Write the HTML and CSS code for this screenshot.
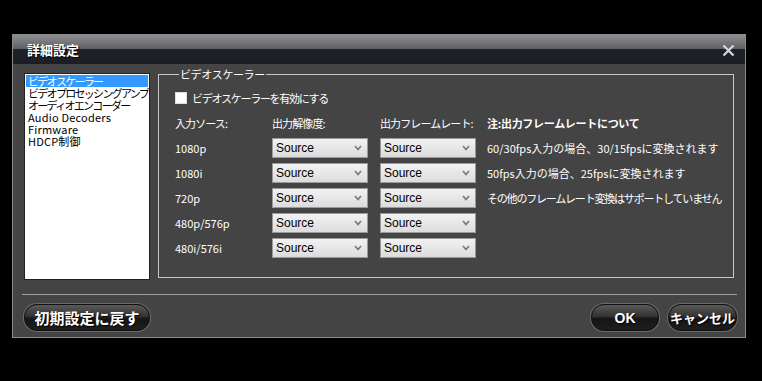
FILE: index.html
```html
<html>
	<head>
		<title>詳細設定</title>
		<meta name="viewport" content="width=device-width, initial-scale=1">
		<link rel="stylesheet" href="styles.css">
	</head>
	<body>
		<div id="dialog">
			<div id="titlebar">
				<span class="title">詳細設定</span>
				<svg class="close" width="13" height="13" viewBox="0 0 13 13"><path d="M1.5 1.5 L11.5 11.5 M11.5 1.5 L1.5 11.5" stroke="#d8d8d8" stroke-width="2.2"/></svg>
			</div>
			<div id="body">
				<ul id="menu">
					<li class="sel jp">ビデオスケーラー</li>
					<li class="jp">ビデオプロセッシングアンプ</li>
					<li class="jp">オーディオエンコーダー</li>
					<li>Audio Decoders</li>
					<li>Firmware</li>
					<li>HDCP制御</li>
				</ul>
				<fieldset id="group">
					<legend>ビデオスケーラー</legend>
					<label class="check"><span class="box"></span>ビデオスケーラーを有効にする</label>
					<div class="grid">
						<div class="head">入力ソース:</div>
						<div class="head">出力解像度:</div>
						<div class="head">出力フレームレート:</div>
						<div class="head note-title">注:出力フレームレートについて</div>

						<div class="src">1080p</div>
						<div class="select">Source<svg width="8" height="6" viewBox="0 0 8 6"><path d="M1 1 L4 4.5 L7 1" stroke="#777" stroke-width="1.6" fill="none"/></svg></div>
						<div class="select">Source<svg width="8" height="6" viewBox="0 0 8 6"><path d="M1 1 L4 4.5 L7 1" stroke="#777" stroke-width="1.6" fill="none"/></svg></div>
						<div class="note">60/30fps入力の場合、30/15fpsに変換されます</div>

						<div class="src">1080i</div>
						<div class="select">Source<svg width="8" height="6" viewBox="0 0 8 6"><path d="M1 1 L4 4.5 L7 1" stroke="#777" stroke-width="1.6" fill="none"/></svg></div>
						<div class="select">Source<svg width="8" height="6" viewBox="0 0 8 6"><path d="M1 1 L4 4.5 L7 1" stroke="#777" stroke-width="1.6" fill="none"/></svg></div>
						<div class="note">50fps入力の場合、25fpsに変換されます</div>

						<div class="src">720p</div>
						<div class="select">Source<svg width="8" height="6" viewBox="0 0 8 6"><path d="M1 1 L4 4.5 L7 1" stroke="#777" stroke-width="1.6" fill="none"/></svg></div>
						<div class="select">Source<svg width="8" height="6" viewBox="0 0 8 6"><path d="M1 1 L4 4.5 L7 1" stroke="#777" stroke-width="1.6" fill="none"/></svg></div>
						<div class="note tight">その他のフレームレート変換はサポートしていません</div>

						<div class="src">480p/576p</div>
						<div class="select">Source<svg width="8" height="6" viewBox="0 0 8 6"><path d="M1 1 L4 4.5 L7 1" stroke="#777" stroke-width="1.6" fill="none"/></svg></div>
						<div class="select">Source<svg width="8" height="6" viewBox="0 0 8 6"><path d="M1 1 L4 4.5 L7 1" stroke="#777" stroke-width="1.6" fill="none"/></svg></div>
						<div></div>

						<div class="src">480i/576i</div>
						<div class="select">Source<svg width="8" height="6" viewBox="0 0 8 6"><path d="M1 1 L4 4.5 L7 1" stroke="#777" stroke-width="1.6" fill="none"/></svg></div>
						<div class="select">Source<svg width="8" height="6" viewBox="0 0 8 6"><path d="M1 1 L4 4.5 L7 1" stroke="#777" stroke-width="1.6" fill="none"/></svg></div>
						<div></div>
					</div>
				</fieldset>
			</div>
			<div id="footer">
				<div class="btn reset">初期設定に戻す</div>
				<div class="right">
					<div class="btn ok">OK</div>
					<div class="btn cancel">キャンセル</div>
				</div>
			</div>
		</div>
	</body>
</html>
```

FILE: styles.css
```css
* {
	font-family: "Noto Sans CJK JP", "DejaVu Sans", sans-serif;
	box-sizing: border-box;
}
body {
	margin: 0;
	background: black;
	width: 762px;
	height: 381px;
	overflow: hidden;
}
#dialog {
	margin: 34px 0 0 12px;
	width: 734px;
	height: 304px;
	background: #444;
	border: 1px solid #8a8a8a;
	display: flex;
	flex-direction: column;
}
#titlebar {
	height: 29px;
	background: linear-gradient(#8c8e90 0%, #5e6064 48%, #1f2329 49%, #1a1e24 100%);
	display: flex;
	align-items: center;
	justify-content: space-between;
	padding: 0 10px 0 14px;
}
.title {
	color: white;
	font-weight: bold;
	font-size: 13px;
	text-shadow: 1px 1px 1px black;
}
.close {
	margin-top: 1px;
}
#body {
	display: flex;
	padding: 9px 0 0 11px;
	gap: 8px;
	height: 222px;
}
#menu {
	list-style: none;
	margin: 0;
	padding: 1px;
	width: 126px;
	height: 207px;
	background: white;
	border: 1px solid #222;
	font-size: 11px;
	line-height: 12px;
}
#menu li {
	color: black;
	padding-left: 2px;
	white-space: nowrap;
	letter-spacing: 0.2px;
}
#menu li.jp {
	letter-spacing: -1.7px;
}
#menu li.sel {
	background: #3399ff;
	color: white;
}
#group {
	flex: none;
	width: 576px;
	min-width: 0;
	margin: -6px 0 0 0;
	border: 1px solid #c8c8c8;
	padding: 10px 16px 0 16px;
	height: 211px;
	color: white;
	font-size: 11px;
}
legend {
	font-size: 11px;
	line-height: 14px;
	padding: 0 1px;
	margin-left: 4px;
	color: white;
	letter-spacing: -0.4px;
}
.check {
	display: flex;
	align-items: center;
	gap: 5px;
	height: 14px;
	font-size: 11px;
	letter-spacing: -1.3px;
}
.box {
	width: 12px;
	height: 12px;
	background: white;
	border: 1px solid #ddd;
}
.grid {
	display: grid;
	grid-template-columns: 97px 108px 107px auto;
	grid-auto-rows: 20px;
	row-gap: 5px;
	margin-top: 8px;
	align-items: center;
}
.head {
	font-size: 11px;
	height: 20px;
	line-height: 20px;
	white-space: nowrap;
	letter-spacing: -0.9px;
}
.note-title {
	font-weight: bold;
	letter-spacing: -0.3px;
}
.src, .note {
	font-size: 11px;
	white-space: nowrap;
}
.tight {
	letter-spacing: -1.2px;
}
.select {
	width: 96px;
	height: 20px;
	background: linear-gradient(#f2f2f2, #dcdcdc);
	border: 1px solid #9a9a9a;
	color: black;
	font-family: "Liberation Sans", sans-serif;
	font-size: 12px;
	display: flex;
	align-items: center;
	justify-content: space-between;
	padding: 0 5px 0 3px;
}
#footer {
	margin: 0 8px 0 9px;
	border-top: 1px solid #a0a0a0;
	margin-top: auto;
	height: 43px;
	display: flex;
	justify-content: space-between;
	align-items: flex-start;
	padding: 9px 0 0 2px;
}
.right {
	display: flex;
	gap: 9px;
}
.btn {
	height: 27px;
	border-radius: 13px;
	background: linear-gradient(#5a5a5a 0%, #333 45%, #151515 55%, #1e1e1e 100%);
	border: 1px solid #101010;
	box-shadow: 0 0 0 1px #6a6a6a;
	color: white;
	font-weight: bold;
	display: flex;
	align-items: center;
	justify-content: center;
	text-shadow: 1px 1px 1px black;
}
.reset {
	width: 126px;
	font-size: 15px;
}
.ok {
	width: 68px;
	font-size: 14px;
	font-family: "Liberation Sans", sans-serif;
}
.cancel {
	width: 69px;
	font-size: 13px;
}
```
